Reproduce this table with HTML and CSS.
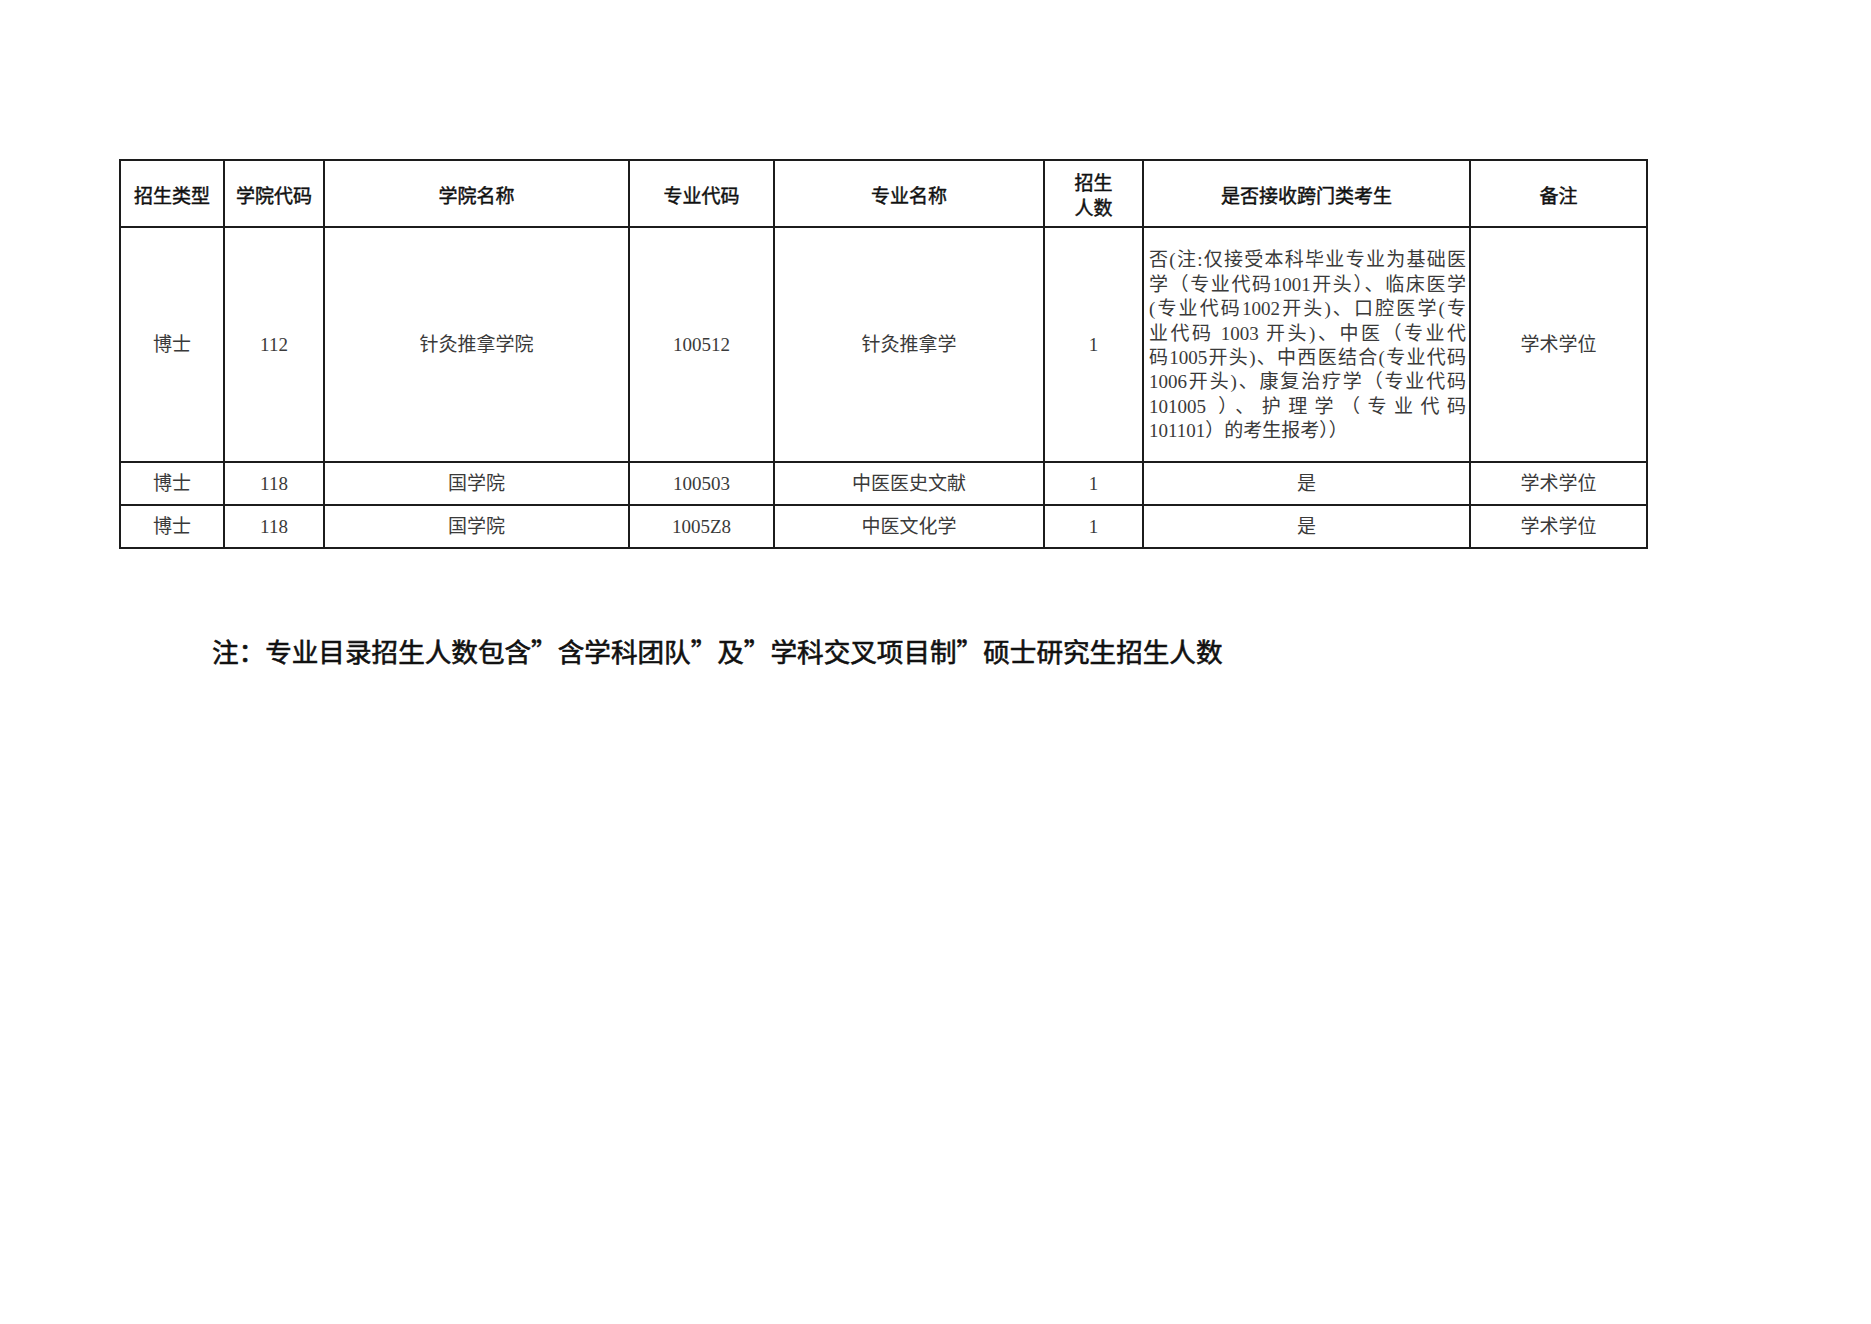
FILE: index.html
```html
<!DOCTYPE html>
<html lang="zh-CN">
<head>
<meta charset="utf-8">
<title>招生专业目录</title>
<link rel="stylesheet" href="styles.css">
</head>
<body>
<main class="page">
  <div class="table">
    <div class="cell head">招生类型</div>
    <div class="cell head">学院代码</div>
    <div class="cell head">学院名称</div>
    <div class="cell head">专业代码</div>
    <div class="cell head">专业名称</div>
    <div class="cell head two">招生<br>人数</div>
    <div class="cell head">是否接收跨门类考生</div>
    <div class="cell head">备注</div>

    <div class="cell">博士</div>
    <div class="cell">112</div>
    <div class="cell">针灸推拿学院</div>
    <div class="cell">100512</div>
    <div class="cell">针灸推拿学</div>
    <div class="cell">1</div>
    <div class="cell note-cell">
      <div class="lines">
        <span class="jl">否(注:仅接受本科毕业专业为基础医</span>
        <span class="jl">学（专业代码1001开头）、临床医学</span>
        <span class="jl">(专业代码1002开头)、口腔医学(专</span>
        <span class="jl">业代码 1003 开头)、中医（专业代</span>
        <span class="jl">码1005开头)、中西医结合(专业代码</span>
        <span class="jl">1006开头)、康复治疗学（专业代码</span>
        <span class="jl">101005 ）、护理学（专业代码</span>
        <span class="ll">101101）的考生报考））</span>
      </div>
    </div>
    <div class="cell">学术学位</div>

    <div class="cell">博士</div>
    <div class="cell">118</div>
    <div class="cell">国学院</div>
    <div class="cell">100503</div>
    <div class="cell">中医医史文献</div>
    <div class="cell">1</div>
    <div class="cell">是</div>
    <div class="cell">学术学位</div>

    <div class="cell">博士</div>
    <div class="cell">118</div>
    <div class="cell">国学院</div>
    <div class="cell">1005Z8</div>
    <div class="cell">中医文化学</div>
    <div class="cell">1</div>
    <div class="cell">是</div>
    <div class="cell">学术学位</div>
  </div>

  <p class="footnote">注：专业目录招生人数包含”含学科团队”及”学科交叉项目制”硕士研究生招生人数</p>
</main>
</body>
</html>
```

FILE: styles.css
```css
html, body {
  margin: 0;
  padding: 0;
  background: #ffffff;
}

.page {
  padding: 159px 0 0 119px;
  font-family: "Liberation Serif", "Noto Sans CJK SC", serif;
}

.table {
  display: grid;
  grid-template-columns: 102px 98px 303px 143px 268px 97px 325px 175px;
  grid-template-rows: 65px 233px 41px 41px;
  gap: 2px;
  padding: 2px;
  background: #1c1c1c;
  width: max-content;
}

.cell {
  background: #ffffff;
  display: flex;
  align-items: center;
  justify-content: center;
  text-align: center;
  font-size: 19px;
  color: #3a3a3a;
  line-height: 24px;
}

.head {
  font-family: "Noto Sans CJK SC", sans-serif;
  font-weight: 400;
  -webkit-text-stroke: 0.45px #111111;
  color: #111111;
  padding-top: 3px;
}

.head.two {
  line-height: 25px;
  padding-top: 0;
}

.note-cell {
  justify-content: flex-start;
  padding: 0 3px 0 5px;
  text-align: left;
}

.lines {
  width: 100%;
  padding-top: 3px;
}

.jl,
.ll {
  display: block;
  line-height: 24.4px;
}

.jl {
  text-align: justify;
  text-align-last: justify;
}

.ll {
  text-align: left;
}

.footnote {
  margin: 86px 0 0 93px;
  font-family: "Noto Sans CJK SC", sans-serif;
  font-weight: 400;
  -webkit-text-stroke: 0.6px #111111;
  font-size: 26.6px;
  line-height: 32px;
  color: #111111;
}
```
